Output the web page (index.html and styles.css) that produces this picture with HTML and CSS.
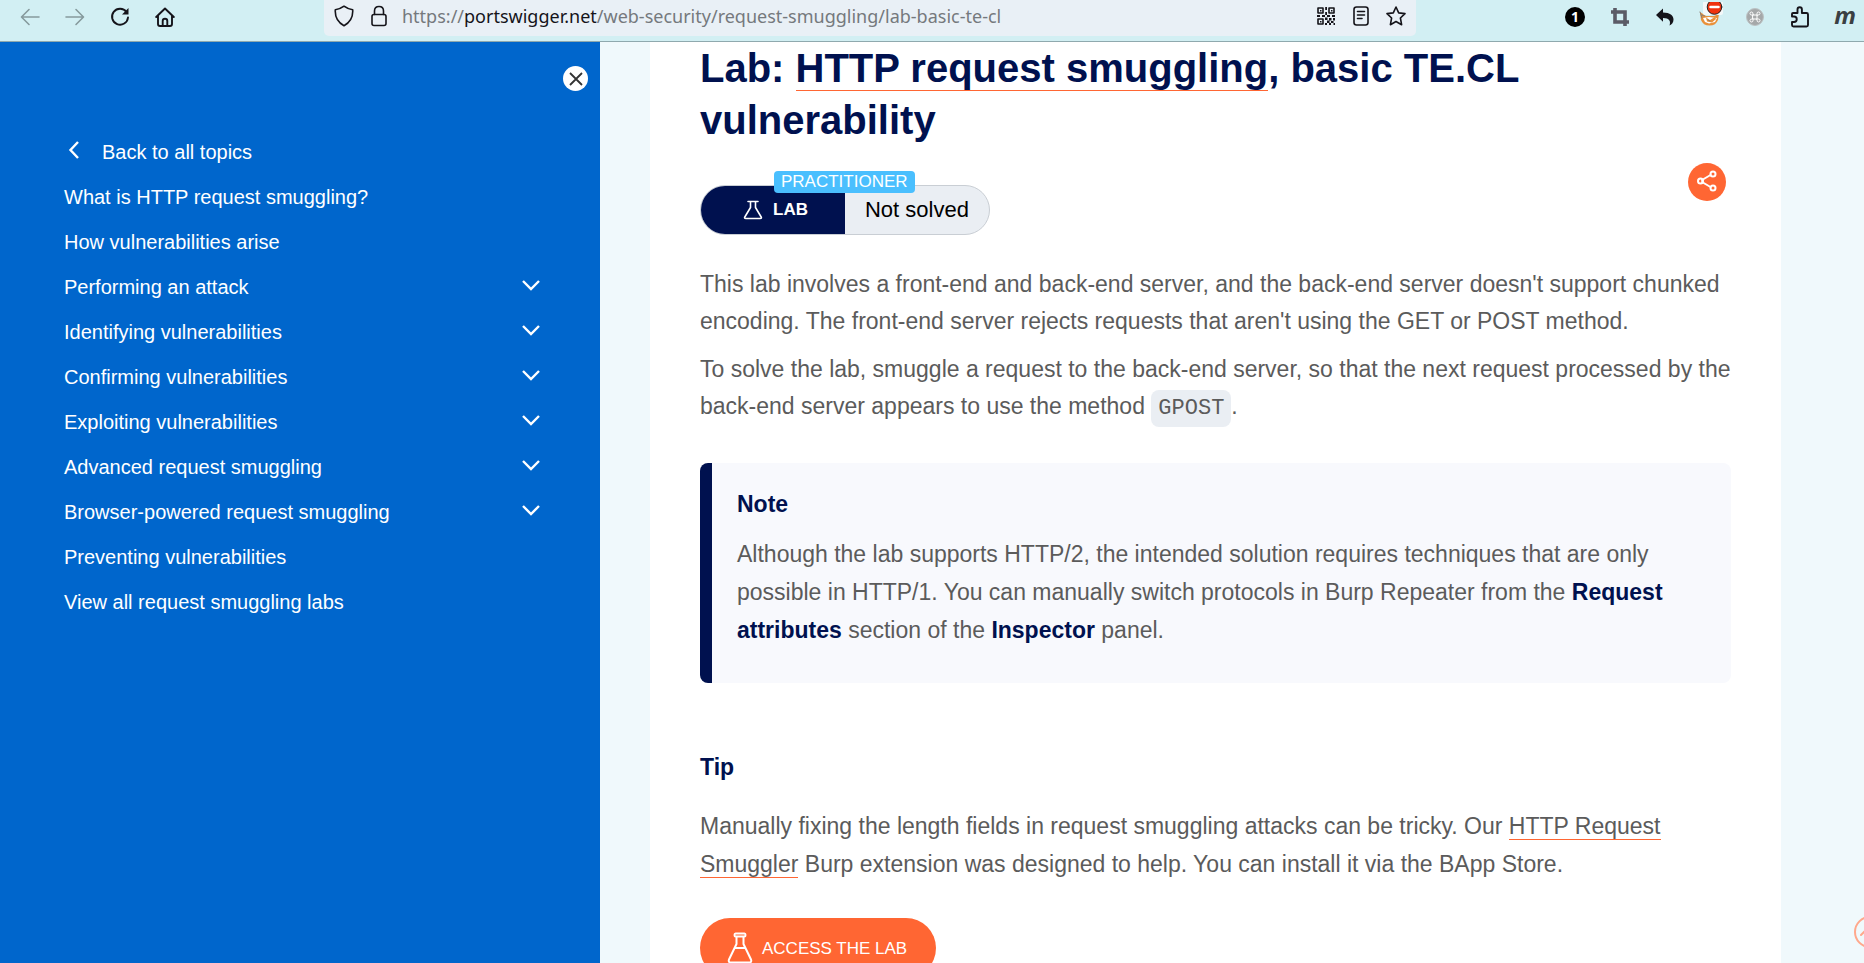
FILE: index.html
```html
<!DOCTYPE html>
<html lang="en">
<head>
<meta charset="utf-8">
<title>Lab: HTTP request smuggling, basic TE.CL vulnerability</title>
<link rel="stylesheet" href="styles.css">
</head>
<body>
<header class="toolbar">
  <div class="toolbar-nav">
    <button class="tool tool-off" aria-label="Back"><svg width="20" height="20" viewBox="0 0 20 20"><path d="M19 10H2M9 2.500L1.500 10 9 17.500"/></svg></button>
    <button class="tool tool-off" aria-label="Forward"><svg width="20" height="20" viewBox="0 0 20 20"><path d="M1 10h17M11 2.500l7.500 7.500-7.500 7.500"/></svg></button>
    <button class="tool" aria-label="Reload"><svg width="20" height="20" viewBox="0 0 20 20" class="bold"><path d="M16.500 5A8 8 0 1 0 18 10.500"/><path class="fill" d="M18.500 1v6.500H12z"/></svg></button>
    <button class="tool" aria-label="Home"><svg width="20" height="20" viewBox="0 0 20 20" class="bold"><path d="M1.200 10L10 1.500 18.800 10M3 8.500V17q0 2 2 2h10q2 0 2-2V8.500M7.700 19v-5q0-2.300 2.300-2.300t2.300 2.300v5"/></svg></button>
  </div>
  <div class="address">
    <svg width="20" height="22" viewBox="0 0 20 22"><path d="M10 1.200C7 3.500 4.500 4.300 1.300 4.700c-.4 6 2 12.300 8.700 16 6.700-3.700 9.100-10 8.700-16C15.500 4.300 13 3.500 10 1.200z"/></svg>
    <svg width="20" height="22" viewBox="0 0 20 22"><rect x="3" y="9.500" width="14" height="11" rx="2"/><path d="M5.500 9.500V6q0-4.500 4.500-4.500T14.500 6v3.500"/></svg>
    <div class="url">https://<span class="host">portswigger.net</span>/web-security/request-smuggling/lab-basic-te-cl</div>
    <button class="tool" aria-label="QR code"><svg width="20" height="20" viewBox="0 0 20 20"><path d="M2 2h5v5H2zM13 2h5v5h-5zM2 13h5v5H2z"/><path class="fill" d="M4 4h1.500v1.500H4zM15 4h1.500v1.500H15zM4 15h1.500v1.500H4zM9.200 1H11v3H9.200zM9.200 6H11v3H9.200zM1 9h3v2H1zM6 9h3v2H6zM11 9h3v2h-3zM16 9h3v2h-3zM9 11.500h2.500V14H9zM13 12h2.500v2.500H13zM17 12h2v2.500h-2zM11 14.500h2.500V17H11zM15 15h2.500v2H15zM9 17h2v2H9zM13 17h2v2h-2zM17.500 17H19v2h-1.500z"/></svg></button>
    <button class="tool" aria-label="Reader view"><svg width="20" height="20" viewBox="0 0 20 20"><rect x="3" y="1" width="14" height="18" rx="2.500"/><path d="M6.500 5.500h7M6.500 9h7M6.500 12.500h4.500"/></svg></button>
    <button class="tool" aria-label="Bookmark"><svg width="20" height="20" viewBox="0 0 20 20"><path d="M10 1l2.700 5.900 6.300.7-4.600 4.400 1.200 6.700L10 15.500l-5.600 3.200L5.600 12 1 7.600l6.300-.7z"/></svg></button>
  </div>
  <div class="extensions">
    <button class="tool" aria-label="Extension 1"><span class="one">1</span></button>
    <button class="tool" aria-label="Crop"><svg width="20" height="20" viewBox="0 0 20 20" class="crop"><path d="M1 5h14v14M5 1v14h14"/></svg></button>
    <button class="tool" aria-label="Undo"><svg width="20" height="20" viewBox="0 0 20 20"><path class="fill" d="M1 8l7-6.500V5.500c7 0 10.500 3 10.500 7 0 3-1.500 5-4 6 1.500-4 0-7.500-6.500-7.500v3.800z"/></svg></button>
    <button class="tool" aria-label="Proxy"><svg width="26" height="30" viewBox="0 0 26 30"><path fill="#e9913a" stroke="none" d="M3 10l6 4h8l5-2-1 6q-2 5.500-8.500 5.500T4 18z"/><path fill="#fff" stroke="none" d="M6 16l6-1 8 1-2 4-6 1.500-4-1.500z"/><path fill="#e9913a" stroke="none" d="M9 15.500l4 2.500 5-3 1 2-4 3.500-5-1z"/><path class="whisker" d="M3 10l2 6M4.500 13l3 1M11 18l2 1"/><rect class="plate" x="6" y="-1" width="20" height="14" rx="2"/><circle cx="17.500" cy="5" r="7.300" fill="#f0330f" stroke="#222" stroke-width="1"/><path class="white" d="M13.500 5h8"/></svg></button>
    <button class="tool" aria-label="Command"><svg width="20" height="20" viewBox="0 0 20 20"><circle cx="10" cy="10" r="8.500" fill="#a5a8a9" stroke="#bcc2c3" stroke-width="1"/><path class="thin-white" d="M8 8h4v4H8zM8 8H6.500A1.500 1.500 0 1 1 8 6.500zM12 8V6.500A1.500 1.500 0 1 1 13.500 8zM12 12h1.500a1.500 1.500 0 1 1-1.500 1.500zM8 12v1.500A1.500 1.500 0 1 1 6.500 12z"/></svg></button>
    <button class="tool" aria-label="Extensions"><svg width="20" height="22" viewBox="0 0 20 22" class="bold"><path d="M2 10.500V8q0-1 1-1h4.500V3.500a2.200 2.200 0 0 1 4.400 0V7H16.500Q18 7 18 8.500v10.500q0 1.500-1.500 1.500H3.500Q2 20.500 2 19v-3h2a2.700 2.700 0 0 0 0-5.500z"/></svg></button>
    <button class="tool" aria-label="Extension m"><span class="em">m</span></button>
  </div>
</header>
<div class="page">
  <aside class="sidebar">
    <button class="close" aria-label="Close menu"><svg width="14" height="14" viewBox="0 0 14 14"><path d="M1 1l12 12M13 1L1 13"/></svg></button>
    <nav class="topics">
      <a class="topic back" href="#"><svg width="12" height="18" viewBox="0 0 12 18"><path d="M10 1L2.500 9l7.500 8"/></svg>Back to all topics</a>
      <a class="topic" href="#">What is HTTP request smuggling?</a>
      <a class="topic" href="#">How vulnerabilities arise</a>
      <a class="topic" href="#">Performing an attack<svg width="18" height="12" viewBox="0 0 18 12"><path d="M1 2l8 8 8-8"/></svg></a>
      <a class="topic" href="#">Identifying vulnerabilities<svg width="18" height="12" viewBox="0 0 18 12"><path d="M1 2l8 8 8-8"/></svg></a>
      <a class="topic" href="#">Confirming vulnerabilities<svg width="18" height="12" viewBox="0 0 18 12"><path d="M1 2l8 8 8-8"/></svg></a>
      <a class="topic" href="#">Exploiting vulnerabilities<svg width="18" height="12" viewBox="0 0 18 12"><path d="M1 2l8 8 8-8"/></svg></a>
      <a class="topic" href="#">Advanced request smuggling<svg width="18" height="12" viewBox="0 0 18 12"><path d="M1 2l8 8 8-8"/></svg></a>
      <a class="topic" href="#">Browser-powered request smuggling<svg width="18" height="12" viewBox="0 0 18 12"><path d="M1 2l8 8 8-8"/></svg></a>
      <a class="topic" href="#">Preventing vulnerabilities</a>
      <a class="topic" href="#">View all request smuggling labs</a>
    </nav>
  </aside>
  <main class="content">
    <article class="lab">
      <h1>Lab: <a class="link" href="#">HTTP request smuggling</a>, basic TE.CL vulnerability</h1>
      <div class="status-row">
        <div class="status">
          <span class="status-kind"><svg width="20" height="20" viewBox="0 0 20 20"><path d="M5 1.500h10M7.500 1.500v6L1.800 17q-.8 1.500 1 1.500h14.400q1.800 0 1-1.500L12.500 7.500v-6"/></svg>LAB</span>
          <span class="status-text">Not solved</span>
          <span class="level">PRACTITIONER</span>
        </div>
        <button class="share" aria-label="Share"><svg width="22" height="24" viewBox="0 0 22 24"><path d="M6 10l8.500-5M6 12l8.500 5"/><circle cx="4.500" cy="11" r="2.500"/><circle cx="17" cy="4" r="2.500"/><circle cx="17" cy="18" r="2.500"/></svg></button>
      </div>
      <div class="text">
        <p>This lab involves a front-end and back-end server, and the back-end server doesn't support chunked encoding. The front-end server rejects requests that aren't using the GET or POST method.</p>
        <p>To solve the lab, smuggle a request to the back-end server, so that the next request processed by the back-end server appears to use the method <code>GPOST</code>.</p>
      </div>
      <section class="note">
        <h4>Note</h4>
        <p>Although the lab supports HTTP/2, the intended solution requires techniques that are only possible in HTTP/1. You can manually switch protocols in Burp Repeater from the <strong>Request attributes</strong> section of the <strong>Inspector</strong> panel.</p>
      </section>
      <section class="tip">
        <h4>Tip</h4>
        <p>Manually fixing the length fields in request smuggling attacks can be tricky. Our <a class="link" href="#">HTTP Request Smuggler</a> Burp extension was designed to help. You can install it via the BApp Store.</p>
      </section>
      <a class="access" href="#"><svg width="26" height="32" viewBox="0 0 26 32"><path d="M8.500 1.500h9q1 0 1 1.500t-1 1.500h-9q-1 0-1-1.500t1-1.500zM9.500 4.500V12L2 27.500q-1 3 2 3h18q3 0 2-3L16.500 12V4.500M7.500 16h11"/></svg>ACCESS THE LAB</a>
    </article>
    <button class="to-top" aria-label="Back to top"><svg width="20" height="16" viewBox="0 0 20 16"><path d="M1 11l9-9 9 9"/></svg></button>
  </main>
</div>
</body>
</html>
```

FILE: styles.css
```css
* { box-sizing: border-box; }

body {
  margin: 0;
  height: 100vh;
  display: flex;
  flex-direction: column;
  overflow: hidden;
  font-family: "Liberation Sans", Arial, sans-serif;
  font-size: 23px;
  line-height: 37px;
  color: #5b5b5b;
}

h1, h4, p { margin: 0; }
a { color: inherit; text-decoration: none; }
button { border: 0; padding: 0; background: none; font: inherit; cursor: pointer; }

svg {
  display: block;
  flex: none;
  fill: none;
  stroke: currentColor;
  stroke-width: 2;
  stroke-linecap: round;
  stroke-linejoin: round;
}

/* Browser toolbar */
.toolbar {
  flex: none;
  display: flex;
  height: 42px;
  padding-bottom: 5px;
  background: #d2eff3;
  border-bottom: 1px solid #8fa9ae;
  color: #15141a;
}
.toolbar svg { stroke-width: 1.600; }
.toolbar svg.bold { stroke-width: 1.900; }
.toolbar .fill { fill: currentColor; stroke: none; }
.toolbar .crop { color: #5b5b66; stroke-width: 3.600; stroke-linecap: butt; stroke-linejoin: miter; }
.toolbar .plate { fill: #f4f8f9; stroke: none; }
.toolbar .whisker { stroke: #8a8076; stroke-width: 1; }
.toolbar .white { stroke: #fff; stroke-width: 2.500; }
.toolbar .thin-white { stroke: #fff; stroke-width: 1; }

.toolbar-nav {
  width: 324px;
  height: 33px;
  padding-left: 20px;
  display: flex;
  align-items: center;
  gap: 25px;
}
.tool {
  flex: none;
  width: 20px;
  height: 20px;
  display: flex;
  align-items: center;
  justify-content: center;
  color: inherit;
}
.tool-off { color: #869a9d; }

.address {
  flex: 1;
  height: 36px;
  padding: 0 10px 4px;
  display: flex;
  align-items: center;
  gap: 15px;
  background: #e9f0f6;
  border-radius: 0 0 5px 5px;
}
.url {
  flex: 1;
  margin-left: -2px;
  font-family: "Noto Sans", sans-serif;
  font-size: 18px;
  line-height: 30px;
  color: #75797d;
  white-space: nowrap;
}
.host { color: #15141a; }

.extensions {
  width: 448px;
  height: 33px;
  padding-right: 9px;
  display: flex;
  align-items: center;
  justify-content: flex-end;
  gap: 25px;
}
.one {
  flex: none;
  width: 20px;
  height: 20px;
  border-radius: 50%;
  background: #000;
  color: #fff;
  font: bold 14px/20px "Noto Sans", sans-serif;
}
.em {
  font: italic bold 24px/20px "Open Sans", sans-serif;
  color: #3a3f42;
  padding-bottom: 3px;
}

.page { flex: 1; min-height: 0; display: flex; }

/* Topic menu */
.sidebar {
  flex: none;
  width: 600px;
  padding: 24px 12px 0 64px;
  background: #0066cc;
  color: #fff;
  overflow: hidden;
}
.close {
  margin-left: auto;
  width: 25px;
  height: 25px;
  border-radius: 50%;
  display: flex;
  align-items: center;
  justify-content: center;
  background: #fff;
  color: #333;
}
.close svg { stroke-width: 1.800; stroke-linecap: butt; }
.topics { padding: 39px 48px 0 0; }
.topic {
  display: flex;
  align-items: center;
  justify-content: space-between;
  font-size: 20px;
  line-height: 45px;
}
.topic svg { stroke-width: 2.400; margin-bottom: 5px; stroke-linecap: butt; stroke-linejoin: miter; }
.back { justify-content: flex-start; gap: 22px; padding-left: 4px; }

/* Lab article */
.content {
  flex: 1;
  position: relative;
  padding: 0 83px 0 50px;
  background: #f0f9fc;
  overflow: hidden;
}
.lab { min-height: 100%; padding: 0 50px; background: #fff; }
.lab h1 {
  font-size: 40px;
  line-height: 52px;
  color: #00114f;
}
.link { border-bottom: 1px solid #ff6633; }

.status-row {
  display: flex;
  justify-content: space-between;
  align-items: flex-start;
  margin-top: 17px;
  padding-right: 5px;
}
.status {
  position: relative;
  display: flex;
  margin-top: 22px;
  height: 50px;
  border: 1px solid #c9ced4;
  border-radius: 25px;
  background: #eaeef3;
  line-height: 48px;
}
.status-kind {
  display: flex;
  align-items: center;
  gap: 10px;
  padding: 0 37px 0 42px;
  border-radius: 24px 0 0 24px;
  background: #00114f;
  color: #fff;
  font-size: 17px;
  font-weight: bold;
}
.status-kind svg { stroke-width: 1.600; }
.status-text { padding: 0 20px; font-size: 22px; color: #000; }
.level {
  position: absolute;
  top: -15px;
  left: 73px;
  padding: 0 7px;
  border-radius: 4px;
  background: #4abffe;
  color: #fff;
  font-size: 17px;
  line-height: 22px;
}
.share {
  width: 38px;
  height: 38px;
  border-radius: 50%;
  display: flex;
  align-items: center;
  justify-content: center;
  background: #ff6633;
  color: #fff;
}

.text { display: grid; gap: 11px; margin-top: 31px; }
code {
  padding: 6px 7px;
  border-radius: 8px;
  background: #eaeef3;
  font-family: "Liberation Mono", "Courier New", monospace;
  font-size: 22px;
  line-height: 1;
}
h4, strong { color: #00114f; font-weight: bold; }
h4 { font-size: 23px; line-height: 37px; }
.note p, .tip p { line-height: 38px; }

.note {
  margin-top: 38px;
  padding: 23px 25px 34px;
  border-left: 12px solid #00114f;
  border-radius: 8px;
  background: #f8f9fd;
}
.note p { margin-top: 12px; }
.tip { margin-top: 66px; }
.tip p { margin-top: 21px; }

.access {
  display: inline-flex;
  align-items: center;
  gap: 9px;
  height: 60px;
  margin-top: 35px;
  padding: 0 29px 0 27px;
  border-radius: 30px;
  background: #ff6633;
  color: #fff;
  font-size: 17px;
}
.to-top {
  position: absolute;
  right: -22px;
  bottom: 15px;
  width: 32px;
  height: 32px;
  border: 2px solid #ffa88c;
  border-radius: 50%;
  display: flex;
  align-items: center;
  justify-content: center;
  color: #ffa88c;
}
```
